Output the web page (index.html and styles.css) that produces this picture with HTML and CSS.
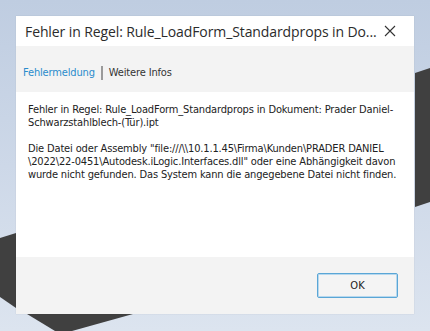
FILE: index.html
```html
<!DOCTYPE html>
<html>
<head>
<meta charset="utf-8">
<link rel="stylesheet" href="styles.css">
</head>
<body>
<div class="dialog">
  <div class="titlebar">
    <span class="title">Fehler in Regel: Rule_LoadForm_Standardprops in Do...</span>
    <svg xmlns="http://www.w3.org/2000/svg" class="close" width="12" height="12" viewBox="0 0 12 12"><path d="M1 1L11 11M11 1L1 11" stroke="#333333" stroke-width="1.1" fill="none"></path></svg>
  </div>
  <div class="tabs">
    <span class="tab active">Fehlermeldung</span>
    <span class="sep"></span>
    <span class="tab">Weitere Infos</span>
  </div>
  <div class="content">
    <p>Fehler in Regel: Rule_LoadForm_Standardprops in Dokument: Prader Daniel-<br>Schwarzstahlblech-(Tür).ipt</p>
    <p>Die Datei oder Assembly "file:///\\10.1.1.45\Firma\Kunden\PRADER DANIEL<br>\2022\22-0451\Autodesk.iLogic.Interfaces.dll" oder eine Abhängigkeit davon<br>wurde nicht gefunden. Das System kann die angegebene Datei nicht finden.</p>
  </div>
  <div class="footer">
    <button class="ok">OK</button>
  </div>
</div>
</body>
</html>
```
FILE: styles.css
```css
html, body {
  margin: 0;
  padding: 0;
}
html {
  background: #cdd8e8;
}
body {
  width: 430px;
  height: 331px;
  overflow: hidden;
  background-color: #cdd8e8;
  background-image:
    url("data:image/svg+xml;utf8,<svg xmlns='http://www.w3.org/2000/svg' width='430' height='331'><polygon points='0,238 16,233 16,308 0,297' fill='%23404040'/><polygon points='27,314 133,314 72,331 55,331' fill='%23404040'/><polygon points='415,73 430,68 430,202 415,207' fill='%23404040'/></svg>"),
    linear-gradient(180deg, #bfcde1 0%, #cdd8e8 50%, #dce4ef 100%);
  background-repeat: no-repeat;
  background-size: 430px 331px;
  padding: 16px 0 0 16px;
  box-sizing: border-box;
  font-family: "DejaVu Sans Condensed", "DejaVu Sans", sans-serif;
}
.dialog {
  width: 398px;
  height: 298px;
  background: #fff;
  display: flex;
  flex-direction: column;
  box-shadow: 0 0 1px rgba(0,0,0,0.15);
}
.titlebar {
  height: 30px;
  display: flex;
  align-items: center;
  justify-content: space-between;
  padding: 0 18px 0 9px;
  font-family: "Open Sans", "Noto Sans", sans-serif;
  font-size: 14px;
  color: #2b2b2b;
}
.title { white-space: nowrap; letter-spacing: -0.1px; }
.close { display: block; flex: none; }
.tabs {
  height: 46px;
  background: #f3f3f3;
  display: flex;
  align-items: center;
  padding: 7px 0 0 7px;
  box-sizing: border-box;
  font-size: 11px;
  color: #333;
  letter-spacing: -0.15px;
}
.tab.active { color: #2a8ccc; }
.sep {
  width: 2px;
  height: 14px;
  background: #9a9a9a;
  margin: 0 6px 0 6px;
}
.content {
  height: 165px;
  padding: 11px 12px 0 12px;
  box-sizing: border-box;
  font-size: 11px;
  line-height: 13px;
  color: #222;
  letter-spacing: -0.15px;
}
.content p {
  margin: 0 0 13px 0;
  white-space: nowrap;
}
.footer {
  flex: 1;
  background: #f3f3f3;
  display: flex;
  justify-content: flex-end;
  align-items: flex-start;
  padding: 16px 16px 0 0;
}
.ok {
  width: 81px;
  height: 25px;
  background: #f4f4f4;
  border: 1px solid #5aa6d6;
  border-radius: 2px;
  box-shadow: inset 0 0 0 1px #b7d8ee;
  font-family: "DejaVu Sans Condensed", "DejaVu Sans", sans-serif;
  font-size: 11px;
  color: #222;
  padding: 0;
}
```
